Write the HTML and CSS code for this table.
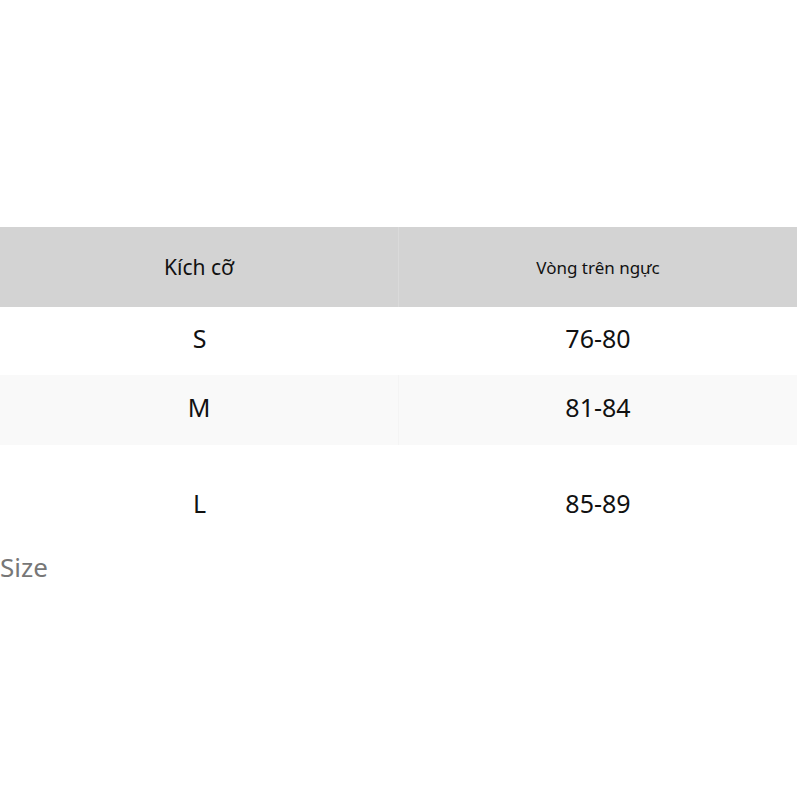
FILE: index.html
```html
<!DOCTYPE html>
<html lang="vi">
<head>
<meta charset="utf-8">
<title>Size</title>
<link rel="stylesheet" href="styles.css">
</head>
<body>
<div class="page">
  <div class="table">
    <div class="row head">
      <div class="cell c1 h1">Kích cỡ</div>
      <div class="cell c2 h2">Vòng trên ngực</div>
    </div>
    <div class="row r-s">
      <div class="cell c1">S</div>
      <div class="cell c2">76-80</div>
    </div>
    <div class="row r-m">
      <div class="cell c1">M</div>
      <div class="cell c2">81-84</div>
    </div>
    <div class="row r-l">
      <div class="cell c1">L</div>
      <div class="cell c2">85-89</div>
    </div>
  </div>
  <div class="caption">Size</div>
</div>
</body>
</html>
```

FILE: styles.css
```css
html, body {
  margin: 0;
  padding: 0;
  background: #ffffff;
}
body {
  font-family: "Noto Sans", "Open Sans", sans-serif;
  color: #111111;
}
.page {
  padding-top: 227px;
  display: flex;
  flex-direction: column;
}
.table {
  width: 797px;
  display: flex;
  flex-direction: column;
}
.row {
  display: grid;
  grid-template-columns: 399px 398px;
}
.cell {
  display: flex;
  align-items: center;
  justify-content: center;
  font-size: 25px;
}
.head {
  height: 80px;
  background: #d3d3d3;
}
.head .c1 {
  border-right: 1px solid #dadada;
}
.h1 {
  font-size: 21px;
}
.h2 {
  font-size: 17px;
}
.r-s {
  height: 68px;
}
.r-s .cell {
  padding-bottom: 6px;
}
.r-m {
  height: 70px;
  background: #f9f9f9;
}
.r-m .cell {
  padding-bottom: 6px;
}
.r-m .c1 {
  border-right: 1px solid #f4f4f4;
}
.r-l {
  height: 118px;
}
.r-l .cell {
  padding-bottom: 2px;
}
.caption {
  font-size: 26px;
  color: #777777;
  line-height: 1;
  margin-top: -9px;
}
```
